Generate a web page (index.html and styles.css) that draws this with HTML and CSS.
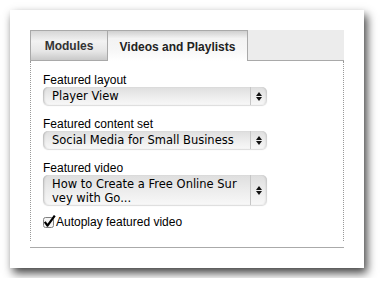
FILE: index.html
```html
<!DOCTYPE html>
<html>
<head>
<meta charset="utf-8">
<link rel="stylesheet" href="styles.css">
</head>
<body>
<div class="card">
  <div class="tabs">
    <div class="tab">Modules</div>
    <div class="tab active">Videos and Playlists</div>
    <div class="tab-fill"></div>
  </div>
  <div class="panel">
    <label class="field-label">Featured layout</label>
    <div class="select">
      <div class="select-text">Player View</div>
      <div class="select-arrows"><span class="up"></span><span class="down"></span></div>
    </div>
    <label class="field-label gap">Featured content set</label>
    <div class="select">
      <div class="select-text">Social Media for Small Business</div>
      <div class="select-arrows"><span class="up"></span><span class="down"></span></div>
    </div>
    <label class="field-label gap">Featured video</label>
    <div class="select tall">
      <div class="select-text">How to Create a Free Online Sur<br>vey with Go...</div>
      <div class="select-arrows"><span class="up"></span><span class="down"></span></div>
    </div>
    <div class="check-row">
      <svg class="check" width="13" height="13" viewBox="0 0 13 13">
        <rect x="0.5" y="2.5" width="10" height="10" rx="2" fill="#f4f4f4" stroke="#808080"/>
        <path d="M1.8 6.8 L4.5 10.6 L11.8 0.6" fill="none" stroke="#000" stroke-width="2.2" stroke-linejoin="round"/>
      </svg>
      <span>Autoplay featured video</span>
    </div>
  </div>
  <div class="rule"></div>
</div>
</body>
</html>
```
FILE: styles.css
```css
html, body {
  margin: 0;
  padding: 0;
  background: #fff;
}
body {
  padding: 10px;
  font-family: "Liberation Sans", Arial, sans-serif;
}
.card {
  width: 354px;
  height: 258px;
  box-sizing: border-box;
  padding: 20px;
  background: #fff;
  box-shadow: 3px 5px 9px rgba(0,0,0,0.75);
}
.tabs {
  display: flex;
  height: 31px;
  width: 314px;
}
.tab {
  box-sizing: border-box;
  height: 31px;
  border: 1px solid #a9a9a9;
  border-right: 0;
  font-size: 12px;
  font-weight: bold;
  color: #333;
  display: flex;
  align-items: center;
  justify-content: center;
  padding-top: 1px;
}
.tab:first-child {
  width: 77px;
  background: linear-gradient(#d6d6d6, #f2f2f2 35%, #e6e6e6 70%, #c9c9c9);
}
.tab.active {
  width: 141px;
  border-right: 1px solid #a9a9a9;
  border-bottom: 0;
  background: linear-gradient(#cfcfcf, #f3f3f3 25%, #f6f6f6 60%, #fff);
  color: #222;
}
.tab-fill {
  flex: 1;
  background: #ececec;
  border-bottom: 1px solid #a9a9a9;
}
.panel {
  width: 314px;
  height: 180px;
  box-sizing: border-box;
  border-left: 1px dotted #999;
  border-right: 1px dotted #999;
  padding: 12px 12px 0 12px;
}
.field-label {
  display: block;
  font-size: 12px;
  line-height: 14px;
  color: #000;
}
.field-label.gap {
  margin-top: 12px;
}
.select {
  display: flex;
  width: 224px;
  height: 18px;
  box-sizing: border-box;
  border-radius: 5px;
  background: linear-gradient(#dedede, #ececec 50%, #f8f8f8);
  box-shadow: inset 2px 0 2px -1px rgba(0,0,0,0.22), 0 1px 1px rgba(0,0,0,0.14), inset -2px 0 2px -1px rgba(0,0,0,0.14);
}
.select.tall {
  height: 30px;
}
.select-text {
  flex: 1;
  font-family: "DejaVu Sans", Verdana, sans-serif;
  font-size: 11.5px;
  line-height: 18px;
  padding-left: 9px;
  color: #000;
  white-space: nowrap;
}
.select.tall .select-text {
  line-height: 14px;
  padding-top: 2px;
}
.select-arrows {
  width: 16px;
  margin: 0;
  border-left: 1px solid #c6c6c6;
  display: flex;
  flex-direction: column;
  align-items: center;
  justify-content: center;
  gap: 1px;
}
.select-arrows .up {
  width: 0;
  height: 0;
  border-left: 3px solid transparent;
  border-right: 3px solid transparent;
  border-bottom: 4px solid #111;
}
.select-arrows .down {
  width: 0;
  height: 0;
  border-left: 3px solid transparent;
  border-right: 3px solid transparent;
  border-top: 4px solid #111;
}
.check-row {
  display: flex;
  align-items: flex-end;
  margin-top: 10px;
  font-size: 12px;
  line-height: 14px;
  color: #000;
}
.check {
  display: block;
  margin-bottom: 1px;
}
.rule {
  margin-top: 6px;
  width: 314px;
  border-top: 1px solid #aaa;
}
```
